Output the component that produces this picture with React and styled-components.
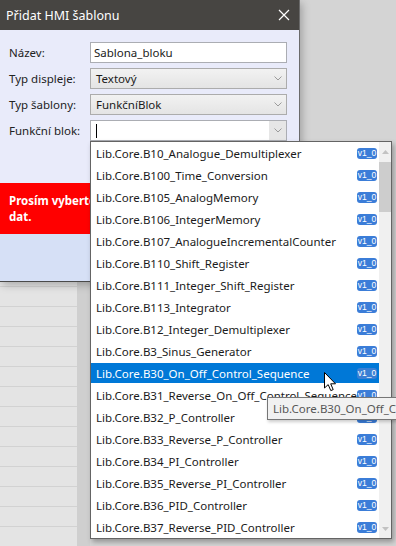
import React from 'react'
import styled, { createGlobalStyle } from 'styled-components'

// Data
const blocks = [
  'Lib.Core.B10_Analogue_Demultiplexer',
  'Lib.Core.B100_Time_Conversion',
  'Lib.Core.B105_AnalogMemory',
  'Lib.Core.B106_IntegerMemory',
  'Lib.Core.B107_AnalogueIncrementalCounter',
  'Lib.Core.B110_Shift_Register',
  'Lib.Core.B111_Integer_Shift_Register',
  'Lib.Core.B113_Integrator',
  'Lib.Core.B12_Integer_Demultiplexer',
  'Lib.Core.B3_Sinus_Generator',
  'Lib.Core.B30_On_Off_Control_Sequence',
  'Lib.Core.B31_Reverse_On_Off_Control_Sequence',
  'Lib.Core.B32_P_Controller',
  'Lib.Core.B33_Reverse_P_Controller',
  'Lib.Core.B34_PI_Controller',
  'Lib.Core.B35_Reverse_PI_Controller',
  'Lib.Core.B36_PID_Controller',
  'Lib.Core.B37_Reverse_PID_Controller',
]
const SELECTED = 10

const GlobalStyle = createGlobalStyle`
  html, body { margin: 0; padding: 0; }
  body {
    width: 396px;
    height: 546px;
    overflow: hidden;
    font-family: "Noto Sans", "Open Sans", sans-serif;
    font-size: 12px;
    color: #1b1b1b;
  }
`

const Screen = styled.div`
  position: relative;
  width: 396px;
  height: 546px;
  overflow: hidden;
  display: flex;
  background: #d4d4d4;
`

const GridColumn = styled.div`
  width: 77px;
  background: repeating-linear-gradient(to bottom, #e4e4e4 0 19px, #d2d2d2 19px 20px);
  background-position: 0 7px;
`

const GridGutter = styled.div`
  width: 13px;
  background: #cfcfcf;
`

// Dialog window
const Dialog = styled.div`
  position: absolute;
  left: 0;
  top: 0;
  width: 300px;
  height: 282px;
  display: flex;
  flex-direction: column;
  border-right: 1px solid #6b6b6b;
  border-bottom: 1px solid #4a4a4a;
  box-sizing: border-box;
  box-shadow: 2px 3px 8px rgba(0, 0, 0, 0.25);
`

const TitleBar = styled.div`
  height: 30px;
  flex: none;
  display: flex;
  align-items: center;
  justify-content: space-between;
  padding: 0 9px 0 6px;
  background: #474542;
  color: #fff;
  font-size: 12.5px;
`

const Body = styled.div`
  flex: 1;
  display: flex;
  flex-direction: column;
  background: #e9ebfa;
`

const Form = styled.div`
  display: grid;
  grid-template-columns: 81px 197px;
  grid-auto-rows: 21px;
  row-gap: 5px;
  padding: 12px 0 0 9px;
  align-items: center;
`

const Label = styled.div`
  font-size: 11.5px;
  color: #222;
`

const Field = styled.div`
  height: 21px;
  box-sizing: border-box;
  display: flex;
  align-items: center;
  border: 1px solid ${p => (p.select ? '#acacac' : '#abadb3')};
  background: ${p => (p.select ? 'linear-gradient(#f2f2f2, #e4e4e4)' : '#fff')};
  padding-left: ${p => (p.select ? 5 : 3)}px;
  font-size: 11.5px;
  color: #1b1b1b;
`

const FieldText = styled.span`
  flex: 1;
  display: flex;
  align-items: center;
`

const Caret = styled.span`
  display: block;
  width: 1px;
  height: 14px;
  margin-left: 2px;
  background: #000;
`

const ArrowBox = styled.div`
  width: 17px;
  align-self: stretch;
  display: flex;
  align-items: center;
  justify-content: center;
  background: ${p => (p.filled ? '#e6e6e6' : 'transparent')};
`

const Banner = styled.div`
  margin-top: 42px;
  height: 51px;
  box-sizing: border-box;
  padding: 10px 9px;
  background: #ff0000;
  color: #fff;
  font-weight: 700;
  font-size: 11.5px;
  line-height: 16px;
  white-space: nowrap;
  overflow: hidden;
`

const Footer = styled.div`
  flex: 1;
  background: #d6e0f6;
`

// Dropdown
const Popup = styled.div`
  position: absolute;
  left: 90px;
  top: 141px;
  width: 302px;
  height: 398px;
  box-sizing: border-box;
  border: 1px solid #646464;
  background: #fff;
  display: flex;
  box-shadow: 2px 3px 5px rgba(0, 0, 0, 0.3);
`

const Items = styled.div`
  flex: 1;
  overflow: hidden;
  padding-top: 1px;
`

const Item = styled.div`
  height: 20px;
  margin-bottom: 2px;
  display: flex;
  align-items: center;
  padding: 0 2px 0 5px;
  background: ${p => (p.active ? '#0078d7' : 'transparent')};
  color: ${p => (p.active ? '#fff' : '#1b1b1b')};
  font-size: 11.5px;
  white-space: nowrap;
`

const ItemName = styled.span`
  flex: 1;
  overflow: hidden;
`

const Badge = styled.span`
  width: 20px;
  height: 11px;
  border-radius: 3px;
  background: ${p => (p.active ? '#3a7fd4' : '#3b7dd8')};
  color: #fff;
  font-size: 8.5px;
  line-height: 11px;
  text-align: center;
  font-family: "Liberation Sans", sans-serif;
`

const Scrollbar = styled.div`
  width: 12px;
  display: flex;
  flex-direction: column;
  background: #f0f0f0;
`

const ScrollArrow = styled.div`
  height: ${p => p.h}px;
  display: flex;
  align-items: center;
  justify-content: center;
`

const Thumb = styled.div`
  height: 50px;
  background: #cdcdcd;
`

const Tooltip = styled.div`
  position: absolute;
  left: 267px;
  top: 397px;
  height: 23px;
  box-sizing: border-box;
  padding: 0 5px;
  display: flex;
  align-items: center;
  border: 1px solid #767676;
  background: #f1f1f1;
  color: #575757;
  font-size: 11.5px;
  white-space: nowrap;
  box-shadow: 1px 2px 3px rgba(0, 0, 0, 0.2);
`

const Pointer = styled.svg`
  position: absolute;
  left: 324px;
  top: 372px;
`

const Chevron = () => (
  <svg width="8" height="5" viewBox="0 0 8 5">
    <path d="M0.5 0.5 L4 4 L7.5 0.5" fill="none" stroke="#9b9b9b" strokeWidth="1" />
  </svg>
)

const Triangle = ({ up }) => (
  <svg width="7" height="4" viewBox="0 0 7 4">
    <path d={up ? 'M0 4 L3.5 0 L7 4 Z' : 'M0 0 L3.5 4 L7 0 Z'} fill="#c2c2c2" />
  </svg>
)

const App = () => {
  return (
    <Screen>
      <GlobalStyle />
      <GridColumn />
      <GridGutter />

      <Dialog>
        <TitleBar>
          <span>Přidat HMI šablonu</span>
          <svg width="12" height="12" viewBox="0 0 12 12">
            <path d="M1 1 L11 11 M11 1 L1 11" stroke="#fff" strokeWidth="1.2" />
          </svg>
        </TitleBar>
        <Body>
          <Form>
            <Label>Název:</Label>
            <Field>
              <FieldText>Sablona_bloku</FieldText>
            </Field>
            <Label>Typ displeje:</Label>
            <Field select>
              <FieldText>Textový</FieldText>
              <ArrowBox><Chevron /></ArrowBox>
            </Field>
            <Label>Typ šablony:</Label>
            <Field select>
              <FieldText>FunkčníBlok</FieldText>
              <ArrowBox><Chevron /></ArrowBox>
            </Field>
            <Label>Funkční blok:</Label>
            <Field>
              <FieldText><Caret /></FieldText>
              <ArrowBox filled><Chevron /></ArrowBox>
            </Field>
          </Form>
          <Banner>
            <div>Prosím vyberte funkční blok z knihovny</div>
            <div>dat.</div>
          </Banner>
          <Footer />
        </Body>
      </Dialog>

      <Popup>
        <Items>
          {blocks.map((name, i) => (
            <Item key={name} active={i === SELECTED}>
              <ItemName>{name}</ItemName>
              <Badge active={i === SELECTED}>v1_0</Badge>
            </Item>
          ))}
        </Items>
        <Scrollbar>
          <ScrollArrow h={20}><Triangle up /></ScrollArrow>
          <Thumb />
          <div style={{ flex: 1 }} />
          <ScrollArrow h={18}><Triangle /></ScrollArrow>
        </Scrollbar>
      </Popup>

      <Tooltip>Lib.Core.B30_On_Off_Control_Sequence</Tooltip>

      <Pointer width="13" height="20" viewBox="0 0 13 20">
        <path d="M0.5 0.5 L0.5 16 L4.2 12.6 L6.8 18.6 L9.2 17.6 L6.7 11.8 L11.5 11.8 Z" fill="#fff" stroke="#000" strokeWidth="1" />
      </Pointer>
    </Screen>
  )
}

export default App
